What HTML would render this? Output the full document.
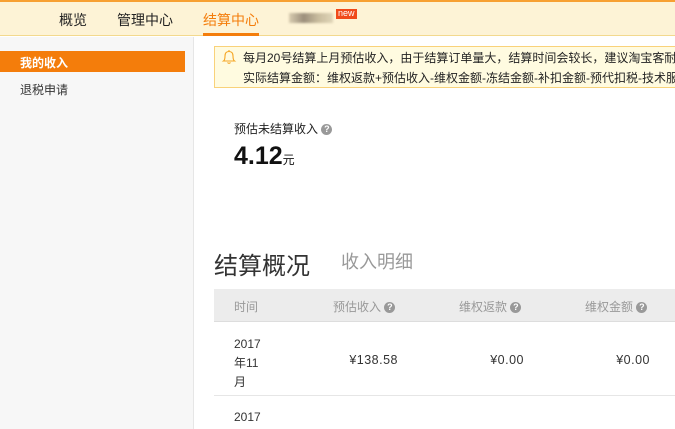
<!DOCTYPE html>
<html><head><meta charset="utf-8"><style>
*{margin:0;padding:0;box-sizing:border-box}
body{width:675px;height:429px;overflow:hidden;background:#fff;font-family:"Liberation Sans","Noto Sans CJK SC",sans-serif;color:#333;position:relative}
.a{position:absolute;white-space:nowrap}
.q{display:inline-block;width:11px;height:11px;border-radius:50%;background:#999;color:#fff;font-size:9px;line-height:11px;text-align:center;font-weight:bold;vertical-align:middle}
.r{text-align:right;width:100px}
</style></head><body>
<div class="a" style="left:0;top:0;width:675px;height:36px;background:#fdf3d6;border-top:2px solid #f7a032;border-bottom:1px solid #f3d98e"></div>
<div class="a" style="left:59px;top:10px;font-size:14px;color:#222">概览</div>
<div class="a" style="left:117px;top:10px;font-size:14px;color:#222">管理中心</div>
<div class="a" style="left:203px;top:10px;font-size:14px;color:#f47d0b">结算中心</div>
<div class="a" style="left:203px;top:33px;width:56px;height:3px;background:#f47d0b"></div>
<div class="a" style="left:289px;top:13px;width:44px;height:10px;background:linear-gradient(90deg,#d8ccb0,#9c8f7c,#c9bc9e,#e0d5b8);filter:blur(1px)"></div>
<div class="a" style="left:336px;top:9px;height:10px;padding:0 2px;background:#f04a1a;color:#fff;font-size:9px;line-height:9px">new</div>
<div class="a" style="left:0;top:37px;width:194px;height:392px;background:#f7f7f7;border-right:1px solid #e6e6e6"></div>
<div class="a" style="left:0;top:51px;width:185px;height:21px;background:#f47d0b"></div>
<div class="a" style="left:20px;top:54px;font-size:12px;color:#fff;font-weight:bold">我的收入</div>
<div class="a" style="left:20px;top:81px;font-size:12px;color:#333">退税申请</div>
<div class="a" style="left:214px;top:46px;width:470px;height:42px;background:#fffbe0;border:1px solid #f9d27a"></div>
<svg class="a" style="left:221px;top:49px" width="16" height="16" viewBox="0 0 16 16"><path d="M2.5 12 Q4 11 4 7 Q4 2.5 8 2.5 Q12 2.5 12 7 Q12 11 13.5 12 Z M6.5 13.5 Q8 15 9.5 13.5 M8 1v1.5" fill="none" stroke="#f5a623" stroke-width="1.1"/></svg>
<div class="a" style="left:243px;top:49px;font-size:12px;color:#222">每月20号结算上月预估收入，由于结算订单量大，结算时间会较长，建议淘宝客耐</div>
<div class="a" style="left:243px;top:69px;font-size:12px;color:#222">实际结算金额：维权返款+预估收入-维权金额-冻结金额-补扣金额-预代扣税-技术服</div>
<div class="a" style="left:234px;top:120px;font-size:12px;color:#222">预估未结算收入 <span class="q">?</span></div>
<div class="a" style="left:234px;top:142px;font-size:25px;font-weight:bold;color:#111">4.12<span style="font-size:12px;font-weight:normal">元</span></div>
<div class="a" style="left:214px;top:246px;font-size:24px;color:#333">结算概况</div>
<div class="a" style="left:341px;top:248px;font-size:18px;color:#999">收入明细</div>
<div class="a" style="left:214px;top:289px;width:461px;height:33px;background:#ececec;border-bottom:1px solid #ddd"></div>
<div class="a" style="left:234px;top:298px;font-size:12px;color:#999">时间</div>
<div class="a" style="left:333px;top:298px;font-size:12px;color:#999">预估收入 <span class="q">?</span></div>
<div class="a" style="left:459px;top:298px;font-size:12px;color:#999">维权返款 <span class="q">?</span></div>
<div class="a" style="left:585px;top:298px;font-size:12px;color:#999">维权金额 <span class="q">?</span></div>
<div class="a" style="left:234px;top:335px;font-size:12px;line-height:19px;color:#333;white-space:normal;width:40px">2017<br>年11<br>月</div>
<div class="a r" style="left:298px;top:353px;font-size:12.5px;letter-spacing:0.5px;color:#333">¥138.58</div>
<div class="a r" style="left:424px;top:353px;font-size:12.5px;letter-spacing:0.5px;color:#333">¥0.00</div>
<div class="a r" style="left:550px;top:353px;font-size:12.5px;letter-spacing:0.5px;color:#333">¥0.00</div>
<div class="a" style="left:214px;top:395px;width:461px;height:1px;background:#e6e6e6"></div>
<div class="a" style="left:234px;top:408px;font-size:12px;line-height:19px;color:#333">2017</div>
</body></html>
